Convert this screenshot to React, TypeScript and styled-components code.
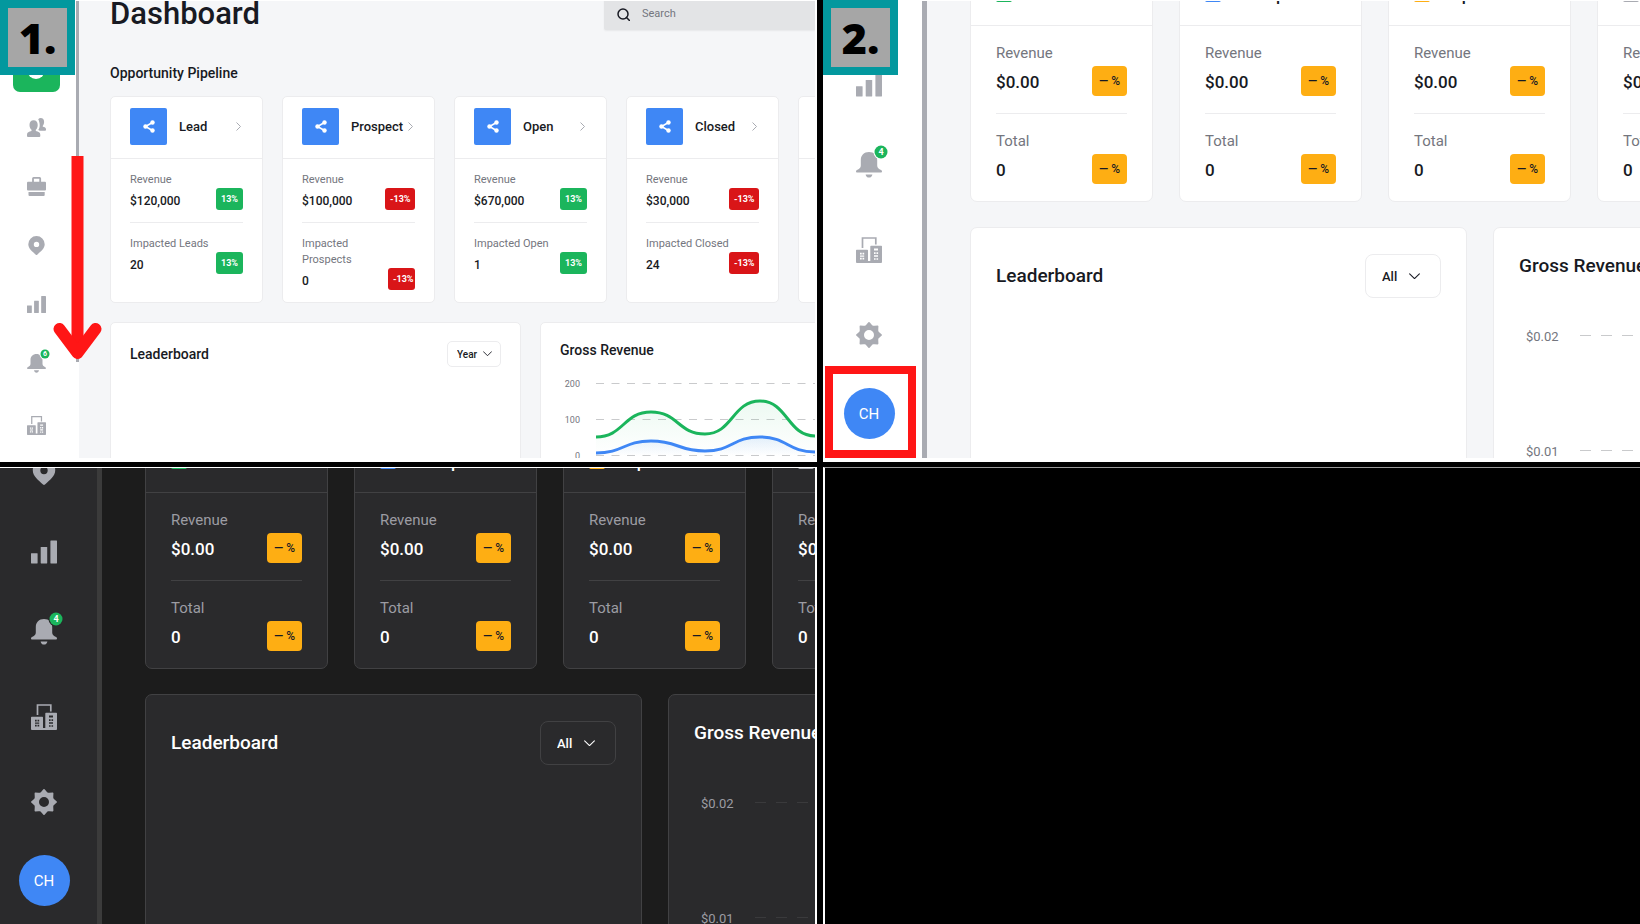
import React from "react";
import styled, { ThemeProvider, createGlobalStyle, css } from "styled-components";

/* ---------- themes ---------- */

const light = {
  page: "#f5f6f8",
  surface: "#ffffff",
  line: "#ececee",
  text: "#181a23",
  muted: "#74767e",
  icon: "#a9abb2",
  thumb: "#a9abb2",
  dash: "#c9cacc",
};

const dark = {
  page: "#1c1c1c",
  surface: "#2a2a2c",
  line: "#414143",
  text: "#ffffff",
  muted: "#9c9ca3",
  icon: "#a9abb2",
  thumb: "#3b3b3b",
  dash: "#3a3a3c",
};

const compact = {
  navWidth: 76,
  navInset: 3,
  navTop: 44,
  bar: 3,
  barHeight: "361px",
  item: 59,
  icon: 19,
  extra: 3,
  dot: 9,
  dotFont: 7,
  mainTop: -6,
  mainLeft: 31,
  gap: 19,
  rowGap: 19,
  card: 153,
  radius: 5,
  pad: 19,
  title: 13,
  label: 11,
  labelLine: 16,
  value: 12,
  valueLine: 18,
  valueTop: 4,
  above: 13,
  below: 12,
  wide: 411,
  wideTop: 18,
  heading: 14,
  headingLine: 18,
  chartTop: 2,
  selectW: 54,
  selectH: 26,
  selectFont: 10,
  selectPad: 9,
  arrowPad: 9,
  selectRadius: 5,
};

const roomy: typeof compact = {
  navWidth: 97,
  navInset: 9,
  navTop: -36,
  bar: 5,
  barHeight: "100%",
  item: 80,
  icon: 26,
  extra: 5,
  dot: 13,
  dotFont: 9,
  mainTop: -38,
  mainLeft: 43,
  gap: 26,
  rowGap: 25,
  card: 183,
  radius: 7,
  pad: 25,
  title: 17,
  label: 15,
  labelLine: 20,
  value: 17,
  valueLine: 28,
  valueTop: 5,
  above: 17,
  below: 17,
  wide: 497,
  wideTop: 26,
  heading: 19,
  headingLine: 24,
  chartTop: 0,
  selectW: 76,
  selectH: 44,
  selectFont: 13,
  selectPad: 16,
  arrowPad: 21,
  selectRadius: 8,
};

type Look = { c: typeof light; m: typeof compact };

const GlobalStyle = createGlobalStyle`
  *, *::before, *::after { box-sizing: border-box; }
  body {
    margin: 0;
    background: #000;
    font-family: Roboto, "Liberation Sans", sans-serif;
  }
  h1, h2, h3, p { margin: 0; padding: 0; font-weight: 500; }
  button, select, input { font: inherit; color: inherit; }
`;

/* ---------- the four-panel board ---------- */

const Board = styled.main`
  display: grid;
  grid-template-columns: repeat(2, minmax(0, 1fr));
  grid-template-rows: minmax(0, 462fr) minmax(0, 457fr);
  column-gap: 6px;
  row-gap: 5px;
  height: 100vh;
  background: #000;
`;

const Panel = styled.section<{ $edge: string }>`
  position: relative;
  min-width: 0;
  background: #fff;
  padding: ${(p) => p.$edge};
`;

const EmptyPanel = styled.section`
  background: #000;
  border-top: 1px solid #999;
  border-left: 2px solid #fff;
`;

const StepBadge = styled.div`
  position: absolute;
  top: 0;
  left: 0;
  width: 75px;
  height: 75px;
  display: grid;
  place-items: center;
  border: 8px solid #03989e;
  background: #a6a6a6;
  color: #000;
  font: 800 43px/56px "Open Sans", sans-serif;
`;

const ArrowMark = styled.svg`
  position: absolute;
  left: 52px;
  top: 156px;
`;

/* ---------- screen shell ---------- */

const Screen = styled.div`
  display: flex;
  height: 100%;
  overflow: hidden;
  background: ${({ theme }) => (theme as Look).c.page};
  color: ${({ theme }) => (theme as Look).c.text};
`;

const Sidebar = styled.aside`
  display: flex;
  flex: none;
  background: ${({ theme }) => (theme as Look).c.surface};
`;

const NavList = styled.nav`
  display: flex;
  flex-direction: column;
  align-items: center;
  width: ${({ theme }) => (theme as Look).m.navWidth}px;
  padding-right: ${({ theme }) => (theme as Look).m.navInset}px;
  margin-top: ${({ theme }) => (theme as Look).m.navTop}px;
  color: ${({ theme }) => (theme as Look).c.icon};
`;

const ScrollThumb = styled.div`
  width: ${({ theme }) => (theme as Look).m.bar}px;
  height: ${({ theme }) => (theme as Look).m.barHeight};
  background: ${({ theme }) => (theme as Look).c.thumb};
`;

const plainButton = css`
  border: 0;
  padding: 0;
  background: none;
  cursor: pointer;
`;

const HomeButton = styled.button`
  ${plainButton}
  display: grid;
  place-items: center;
  flex: none;
  width: 47px;
  height: 47px;
  margin-bottom: 6px;
  border-radius: 7px;
  background: #1bb55c;
`;

const NavButton = styled.button<{ $extra?: boolean }>`
  ${plainButton}
  display: grid;
  place-items: center;
  flex: none;
  height: ${({ theme }) => (theme as Look).m.item}px;
  margin-bottom: ${({ theme, $extra }) => ($extra ? (theme as Look).m.extra : 0)}px;
`;

const IconBox = styled.span`
  position: relative;
  display: block;
  width: ${({ theme }) => (theme as Look).m.icon}px;
  height: ${({ theme }) => (theme as Look).m.icon}px;
  svg {
    display: block;
    width: 100%;
    height: 100%;
    overflow: visible;
  }
`;

const CountDot = styled.span`
  position: absolute;
  left: calc(100% - 1px);
  top: 0;
  transform: translate(-50%, -50%);
  width: ${({ theme }) => (theme as Look).m.dot}px;
  height: ${({ theme }) => (theme as Look).m.dot}px;
  border-radius: 50%;
  background: #1bb55c;
  box-shadow: 0 0 0 1px ${({ theme }) => (theme as Look).c.surface};
  color: #fff;
  text-align: center;
  font-weight: 700;
  font-size: ${({ theme }) => (theme as Look).m.dotFont}px;
  line-height: ${({ theme }) => (theme as Look).m.dot}px;
`;

const Avatar = styled.button`
  ${plainButton}
  position: relative;
  flex: none;
  width: 51px;
  height: 51px;
  margin-top: 13px;
  border-radius: 50%;
  background: #3f87f5;
  color: #fff;
  font-size: 15px;
`;

const RedFrame = styled.span`
  position: absolute;
  inset: -22px -21px -19px -19px;
  border: 8px solid #ff1616;
`;

const Content = styled.div`
  display: flex;
  flex-direction: column;
  align-items: flex-start;
  flex: 1;
  min-width: 0;
  margin-top: ${({ theme }) => (theme as Look).m.mainTop}px;
  padding-left: ${({ theme }) => (theme as Look).m.mainLeft}px;
`;

const PageHeader = styled.header`
  display: flex;
  align-items: center;
  justify-content: space-between;
  align-self: stretch;
  height: 38px;
`;

const PageTitle = styled.h1`
  font-size: 31px;
  line-height: 38px;
`;

const SearchBox = styled.label`
  display: flex;
  align-items: center;
  gap: 12px;
  width: 211px;
  height: 32px;
  padding-left: 13px;
  border-radius: 2px 0 0 2px;
  background: #e3e4e6;
  box-shadow: 0 1px 2px rgba(0, 0, 0, 0.06);
`;

const SearchInput = styled.input`
  flex: 1;
  min-width: 0;
  border: 0;
  padding: 0;
  outline: 0;
  background: none;
  font-size: 11px;
  line-height: 16px;
  &::placeholder {
    color: #74767e;
    opacity: 1;
  }
`;

const SectionTitle = styled.h2`
  margin: 30px 0 13px;
  font-size: 14px;
  line-height: 20px;
`;

/* ---------- cards ---------- */

const Row = styled.div`
  display: flex;
  gap: ${({ theme }) => (theme as Look).m.gap}px;
  margin-bottom: ${({ theme }) => (theme as Look).m.rowGap}px;
`;

const cardFace = css`
  flex: none;
  border: 1px solid ${({ theme }) => (theme as Look).c.line};
  border-radius: ${({ theme }) => (theme as Look).m.radius}px;
  background: ${({ theme }) => (theme as Look).c.surface};
`;

const Card = styled.article`
  ${cardFace}
  width: ${({ theme }) => (theme as Look).m.card}px;
`;

const CompactHead = styled.header`
  display: flex;
  align-items: center;
  padding: 11px 21px 13px 19px;
  border-bottom: 1px solid ${({ theme }) => (theme as Look).c.line};
`;

const RoomyHead = styled.header`
  display: flex;
  align-items: center;
  gap: 20px;
  height: 62px;
  padding: 0 25px;
  border-bottom: 1px solid ${({ theme }) => (theme as Look).c.line};
`;

const StageIcon = styled.span`
  display: grid;
  place-items: center;
  width: 37px;
  height: 37px;
  margin-right: 12px;
  border-radius: 2px;
  background: #3f87f5;
`;

const StageMark = styled.span<{ $color: string }>`
  width: 16px;
  height: 15px;
  border-radius: 2px;
  background: ${(p) => p.$color};
`;

const StageName = styled.h3`
  flex: 1;
  min-width: 0;
  font-size: ${({ theme }) => (theme as Look).m.title}px;
  line-height: 20px;
  white-space: nowrap;
`;

const Metric = styled.div`
  display: flex;
  align-items: flex-end;
  justify-content: space-between;
  margin: 0 ${({ theme }) => (theme as Look).m.pad}px;
  padding: ${({ theme }) => `${(theme as Look).m.above}px 0 ${(theme as Look).m.below}px`};
  &:last-child {
    border-top: 1px solid ${({ theme }) => (theme as Look).c.line};
  }
`;

const MetricLabel = styled.p`
  color: ${({ theme }) => (theme as Look).c.muted};
  font-weight: 400;
  font-size: ${({ theme }) => (theme as Look).m.label}px;
  line-height: ${({ theme }) => (theme as Look).m.labelLine}px;
`;

const MetricValue = styled.p`
  margin-top: ${({ theme }) => (theme as Look).m.valueTop}px;
  font-size: ${({ theme }) => (theme as Look).m.value}px;
  line-height: ${({ theme }) => (theme as Look).m.valueLine}px;
`;

const Change = styled.span<{ $down?: boolean }>`
  flex: 0 1 auto;
  width: ${(p) => (p.$down ? 30 : 27)}px;
  min-width: 27px;
  padding-left: 5px;
  border-radius: 3px;
  background: ${(p) => (p.$down ? "#d91518" : "#1bb55c")};
  color: #fff;
  font-weight: 700;
  font-size: 9px;
  line-height: 22px;
  white-space: nowrap;
`;

const NoChange = styled.span`
  flex: none;
  width: 35px;
  border-radius: 4px;
  background: #feae13;
  color: #181a23;
  text-align: center;
  font-weight: 500;
  font-size: 12px;
  line-height: 30px;
`;

const WideCard = styled.article`
  ${cardFace}
  width: ${({ theme }) => (theme as Look).m.wide}px;
  min-height: 460px;
  padding: ${({ theme }) => `${(theme as Look).m.wideTop}px ${(theme as Look).m.pad}px`};
`;

const WideHead = styled.header`
  display: flex;
  align-items: center;
  justify-content: space-between;
`;

const WideTitle = styled.h2`
  font-size: ${({ theme }) => (theme as Look).m.heading}px;
  line-height: ${({ theme }) => (theme as Look).m.headingLine}px;
`;

const SelectShell = styled.span`
  display: grid;
  align-items: center;
  width: ${({ theme }) => (theme as Look).m.selectW}px;
  height: ${({ theme }) => (theme as Look).m.selectH}px;
  > * {
    grid-area: 1 / 1;
  }
  > svg {
    justify-self: end;
    margin-right: ${({ theme }) => (theme as Look).m.arrowPad}px;
    pointer-events: none;
  }
`;

const Select = styled.select`
  appearance: none;
  width: 100%;
  height: 100%;
  border: 1px solid ${({ theme }) => (theme as Look).c.line};
  border-radius: ${({ theme }) => (theme as Look).m.selectRadius}px;
  background: none;
  padding: 0 0 0 ${({ theme }) => (theme as Look).m.selectPad}px;
  font-size: ${({ theme }) => (theme as Look).m.selectFont}px;
  font-weight: 500;
`;

const Chart = styled.svg`
  display: block;
  margin-top: ${({ theme }) => (theme as Look).m.chartTop}px;
  overflow: visible;
  text {
    fill: ${({ theme }) => (theme as Look).c.muted};
  }
  .grid {
    stroke: ${({ theme }) => (theme as Look).c.dash};
  }
`;

/* ---------- icons ---------- */

const PeopleIcon = () => (
  <svg viewBox="0 0 19 19" fill="currentColor" aria-hidden="true">
    <path d="M6.6 2.3c2.6 0 4.1 1.9 4.1 4.6 0 2-.7 3.9-1.9 4.9v1.3c2.5.7 4.5 1.2 4.5 3.6v1.3a1 1 0 0 1-1 1H1a1 1 0 0 1-1-1v-1.3c0-2.4 2-2.9 4.5-3.6v-1.3C3.3 10.8 2.5 8.9 2.5 6.9c0-2.7 1.5-4.6 4.1-4.6z" />
    <path d="M11.2 1.2C12 .4 12.7 0 13.6 0c2.3 0 3.5 1.6 3.5 3.9 0 1.5-.5 2.8-1.3 3.8v1c1.9.4 3.2.9 3.2 2.5V12c0 .5-.4.8-.8.8h-5.500c-.5-.3-1-.5-1.500-.7 1-1.500 1.500-3.200 1.500-5.100 0-2.300-.600-4.200-1.500-5.800z" />
  </svg>
);

const CaseIcon = () => (
  <svg viewBox="0 0 19 19" fill="currentColor" aria-hidden="true">
    <path d="M6 5V1.5a.6.6 0 0 1 .6-.6h6a.6.6 0 0 1 .6.6V5" fill="none" stroke="currentColor" strokeWidth="1.8" />
    <rect x="0" y="4.7" width="19" height="8.7" rx="1" />
    <path d="M1.5 15h16.2v3a1 1 0 0 1-1 1H2.5a1 1 0 0 1-1-1z" />
  </svg>
);

const PinIcon = () => (
  <svg viewBox="0 0 19 19" fill="currentColor" aria-hidden="true">
    <path
      fillRule="evenodd"
      d="M9.5 0a8.2 8.2 0 0 1 8.2 8.2c0 4.5-4.2 7.2-7.5 10.5a1 1 0 0 1-1.4 0C5.5 15.4 1.3 12.7 1.3 8.2A8.2 8.2 0 0 1 9.5 0zm0 5.7a2.7 2.7 0 1 0 0 5.4 2.7 2.7 0 0 0 0-5.4z"
    />
  </svg>
);

const BarsIcon = () => (
  <svg viewBox="0 0 26 26" fill="currentColor" aria-hidden="true">
    <rect x="0" y="14.2" width="6.6" height="10.3" rx=".4" />
    <rect x="9.7" y="8" width="6.5" height="16.5" rx=".4" />
    <rect x="19.4" y="1.5" width="6.6" height="23" rx=".4" />
  </svg>
);

const BellIcon = () => (
  <svg viewBox="0 0 26 26" fill="currentColor" aria-hidden="true">
    <path d="M13 0c5 0 8.2 3.3 8.2 8v5.5c0 2.2 1.3 3.3 3.3 4.2 1 .4 1.5 1 1.5 1.8 0 .7-.5 1-1.2 1H1.2c-.7 0-1.2-.3-1.2-1 0-.8.5-1.4 1.5-1.8 2-.9 3.3-2 3.3-4.2V8C4.8 3.3 8 0 13 0z" />
    <path d="M9.6 22.4h6.8c-.3 2-1.6 3.2-3.4 3.2s-3.1-1.2-3.4-3.2z" />
  </svg>
);

const BuildingIcon = () => (
  <svg viewBox="0 0 26 26" fill="currentColor" aria-hidden="true">
    <path d="M6.5 11V1h13.3v6.5" fill="none" stroke="currentColor" strokeWidth="1.7" />
    <path
      fillRule="evenodd"
      d="M.7 12.7h10.6a.7.7 0 0 1 .7.7V24h2.3V9.4a.7.7 0 0 1 .7-.7h10.3a.7.7 0 0 1 .7.7V25a.9.9 0 0 1-.9.9H.9A.9.9 0 0 1 0 25V13.4a.7.7 0 0 1 .7-.7z
         M4 15.8v1.8h1.7v-1.8zM6.5 15.8v1.8h1.7v-1.8zM4 20.8v1.8h1.7v-1.8zM6.5 20.8v1.8h1.7v-1.8zM4 18.4v1.4h4.2v-1.4z
         M18 11.6v1.8h4v-1.8zM18 15.2v1.8h1.6v-1.8zM20.5 15.2v1.8h1.6v-1.8zM18 18.3v1.5h4v-1.5zM18 21.2v1.6h1.6v-1.6zM20.5 21.2v1.6h1.6v-1.6z"
    />
  </svg>
);

const toothProfile = [12.2, 10.2, 9.2, 10.2];
const gearPoints = Array.from({ length: 32 }, (_, i) => {
  const radius = toothProfile[i % 4];
  const angle = (i * Math.PI) / 16;
  return `${13 + radius * Math.sin(angle)} ${13 - radius * Math.cos(angle)}`;
});

const GearIcon = () => (
  <svg viewBox="0 0 26 26" fill="currentColor" aria-hidden="true">
    <path
      fillRule="evenodd"
      stroke="currentColor"
      strokeWidth="1.6"
      strokeLinejoin="round"
      d={`M${gearPoints.join("L")}ZM13 7.200a5.800 5.800 0 1 0 0 11.600a5.800 5.800 0 0 0 0-11.600Z`}
    />
  </svg>
);

const ShareIcon = () => (
  <svg width="12" height="13" viewBox="0 0 12 13" fill="#fff" stroke="#fff" aria-hidden="true">
    <path d="M9.5 2.5l-7 4 7 4" fill="none" strokeWidth="1.6" />
    <circle cx="9.5" cy="2.5" r="2.2" stroke="none" />
    <circle cx="2.5" cy="6.5" r="2.2" stroke="none" />
    <circle cx="9.5" cy="10.5" r="2.2" stroke="none" />
  </svg>
);

const SearchIcon = () => (
  <svg width="13" height="13" viewBox="0 0 13 13" fill="none" stroke="#181a23" strokeWidth="1.5" aria-hidden="true">
    <circle cx="6" cy="6" r="5" />
    <path d="M9.5 9.5l3 3" strokeLinecap="round" />
  </svg>
);

const ChevronRight = () => (
  <svg width="5" height="9" viewBox="0 0 5 9" fill="none" stroke="#a9abb2" aria-hidden="true">
    <path d="M.5.5l4 4-4 4" />
  </svg>
);

const ChevronDown = ({ size }: { size: number }) => (
  <svg width={size} height={size / 2 + 1} viewBox="0 0 10 6" fill="none" stroke="currentColor" aria-hidden="true">
    <path d="M.5.7l4.5 4.5 4.5-4.5" strokeLinecap="round" />
  </svg>
);

/* ---------- pieces ---------- */

function NavItem({ label, icon, count, extra }: { label: string; icon: React.ReactNode; count?: number; extra?: boolean }) {
  return (
    <NavButton type="button" aria-label={label} $extra={extra}>
      <IconBox>
        {icon}
        {count !== undefined && <CountDot>{count}</CountDot>}
      </IconBox>
    </NavButton>
  );
}

function Period({ options, size }: { options: string[]; size: number }) {
  return (
    <SelectShell>
      <Select aria-label="Leaderboard period" defaultValue={options[0]}>
        {options.map((o) => (
          <option key={o}>{o}</option>
        ))}
      </Select>
      <ChevronDown size={size} />
    </SelectShell>
  );
}

const stages = [
  { name: "Lead", noun: "Leads", revenue: "$120,000", count: "20", down: false },
  { name: "Prospect", noun: "Prospects", revenue: "$100,000", count: "0", down: true },
  { name: "Open", noun: "Open", revenue: "$670,000", count: "1", down: false },
  { name: "Closed", noun: "Closed", revenue: "$30,000", count: "24", down: true },
];

const xs = [36, 91, 145, 200, 255, 309];
const smooth = (ys: number[]) =>
  ys.reduce((d, y, i) => {
    if (i === 0) return `M${xs[0]} ${y}`;
    const mid = (xs[i - 1] + xs[i]) / 2;
    return `${d}C${mid} ${ys[i - 1]} ${mid} ${y} ${xs[i]} ${y}`;
  }, "");
const greenLine = smooth([76, 51, 73, 40, 75, 50]);
const blueLine = smooth([92, 80, 90, 76, 91, 80]);

function PipelineScreen() {
  return (
    <ThemeProvider theme={{ c: light, m: compact }}>
      <Screen>
        <Sidebar>
          <NavList aria-label="Main">
            <HomeButton type="button" aria-label="Dashboard">
              <svg width="20" height="24" viewBox="0 0 20 24" aria-hidden="true">
                <circle cx="9" cy="13" r="9" fill="#fff" />
              </svg>
            </HomeButton>
            <NavItem label="People" icon={<PeopleIcon />} />
            <NavItem label="Jobs" icon={<CaseIcon />} />
            <NavItem label="Places" icon={<PinIcon />} />
            <NavItem label="Reports" icon={<BarsIcon />} />
            <NavItem label="Notifications" icon={<BellIcon />} count={6} extra />
            <NavItem label="Company" icon={<BuildingIcon />} />
          </NavList>
          <ScrollThumb />
        </Sidebar>
        <Content>
          <PageHeader>
            <PageTitle>Dashboard</PageTitle>
            <SearchBox>
              <SearchIcon />
              <SearchInput type="search" placeholder="Search" aria-label="Search" />
            </SearchBox>
          </PageHeader>
          <SectionTitle>Opportunity Pipeline</SectionTitle>
          <Row>
            {stages.map((s) => (
              <Card key={s.name}>
                <CompactHead>
                  <StageIcon>
                    <ShareIcon />
                  </StageIcon>
                  <StageName>{s.name}</StageName>
                  <ChevronRight />
                </CompactHead>
                <Metric>
                  <div>
                    <MetricLabel>Revenue</MetricLabel>
                    <MetricValue>{s.revenue}</MetricValue>
                  </div>
                  <Change $down={s.down}>{s.down ? "-13%" : "13%"}</Change>
                </Metric>
                <Metric>
                  <div>
                    <MetricLabel>Impacted {s.noun}</MetricLabel>
                    <MetricValue>{s.count}</MetricValue>
                  </div>
                  <Change $down={s.down}>{s.down ? "-13%" : "13%"}</Change>
                </Metric>
              </Card>
            ))}
            <Card>
              <CompactHead>
                <StageIcon />
              </CompactHead>
            </Card>
          </Row>
          <Row>
            <WideCard>
              <WideHead>
                <WideTitle>Leaderboard</WideTitle>
                <Period options={["Year", "Month", "All"]} size={9} />
              </WideHead>
            </WideCard>
            <WideCard>
              <WideTitle>Gross Revenue</WideTitle>
              <Chart width="371" height="120" role="img" aria-label="Gross revenue chart">
                <defs>
                  <linearGradient id="greenFade" x1="0" y1="0" x2="0" y2="1">
                    <stop offset="0" stopColor="#1bb55c" stopOpacity=".08" />
                    <stop offset="1" stopColor="#1bb55c" stopOpacity="0" />
                  </linearGradient>
                  <linearGradient id="blueFade" x1="0" y1="0" x2="0" y2="1">
                    <stop offset="0" stopColor="#3f87f5" stopOpacity=".12" />
                    <stop offset="1" stopColor="#3f87f5" stopOpacity="0" />
                  </linearGradient>
                </defs>
                {["200", "100", "0"].map((v, i) => (
                  <g key={v}>
                    <text x="20" y={26 + i * 36} fontSize="9" textAnchor="end">
                      {v}
                    </text>
                    <path className="grid" d={`M36 ${22.5 + i * 36}H371`} strokeDasharray="8 7.5" />
                  </g>
                ))}
                <path d={`${greenLine}V95H36Z`} fill="url(#greenFade)" />
                <path d={`${blueLine}V95H36Z`} fill="url(#blueFade)" />
                <path d={greenLine} fill="none" stroke="#1bb55c" strokeWidth="3" />
                <path d={blueLine} fill="none" stroke="#3f87f5" strokeWidth="3" />
              </Chart>
            </WideCard>
          </Row>
        </Content>
      </Screen>
    </ThemeProvider>
  );
}

const emptyStages = [
  { name: "Lead", color: "#1bb55c" },
  { name: "Prospect", color: "#3f87f5" },
  { name: "Open", color: "#feae13" },
  { name: "Closed", color: "#a9abb2" },
];

function EmptyScreen({ colors, framed }: { colors: typeof light; framed?: boolean }) {
  return (
    <ThemeProvider theme={{ c: colors, m: roomy }}>
      <Screen>
        <Sidebar>
          <NavList aria-label="Main">
            <NavItem label="Places" icon={<PinIcon />} />
            <NavItem label="Reports" icon={<BarsIcon />} />
            <NavItem label="Notifications" icon={<BellIcon />} count={4} extra />
            <NavItem label="Company" icon={<BuildingIcon />} extra />
            <NavItem label="Settings" icon={<GearIcon />} />
            <Avatar type="button">
              CH
              {framed && <RedFrame />}
            </Avatar>
          </NavList>
          <ScrollThumb />
        </Sidebar>
        <Content>
          <Row>
            {emptyStages.map((s) => (
              <Card key={s.name}>
                <RoomyHead>
                  <StageMark $color={s.color} />
                  <StageName>{s.name}</StageName>
                </RoomyHead>
                <Metric>
                  <div>
                    <MetricLabel>Revenue</MetricLabel>
                    <MetricValue>$0.00</MetricValue>
                  </div>
                  <NoChange>— %</NoChange>
                </Metric>
                <Metric>
                  <div>
                    <MetricLabel>Total</MetricLabel>
                    <MetricValue>0</MetricValue>
                  </div>
                  <NoChange>— %</NoChange>
                </Metric>
              </Card>
            ))}
          </Row>
          <Row>
            <WideCard>
              <WideHead>
                <WideTitle>Leaderboard</WideTitle>
                <Period options={["All", "Year", "Month"]} size={11} />
              </WideHead>
            </WideCard>
            <WideCard>
              <WideTitle>Gross Revenue</WideTitle>
              <Chart width="445" height="300" role="img" aria-label="Gross revenue chart">
                {["$0.02", "$0.01"].map((v, i) => (
                  <g key={v}>
                    <text x="7" y={63 + i * 115} fontSize="13">
                      {v}
                    </text>
                    <path className="grid" d={`M61 ${57.5 + i * 115}H445`} strokeDasharray="11 10" />
                  </g>
                ))}
              </Chart>
            </WideCard>
          </Row>
        </Content>
      </Screen>
    </ThemeProvider>
  );
}

export default function App() {
  return (
    <>
      <GlobalStyle />
      <Board>
        <Panel $edge="1px 2px 4px 0">
          <PipelineScreen />
          <ArrowMark width="50" height="206" viewBox="0 0 50 206" fill="none" stroke="#ff1616" strokeWidth="12" aria-hidden="true">
            <path d="M25.5 0V190" />
            <path d="M7.5 173L25.5 197L43.5 173" strokeLinecap="round" strokeLinejoin="round" />
          </ArrowMark>
          <StepBadge>1.</StepBadge>
        </Panel>
        <Panel $edge="1px 0 4px 2px">
          <EmptyScreen colors={light} framed />
          <StepBadge>2.</StepBadge>
        </Panel>
        <Panel $edge="1px 2px 0 0">
          <EmptyScreen colors={dark} />
        </Panel>
        <EmptyPanel />
      </Board>
    </>
  );
}
